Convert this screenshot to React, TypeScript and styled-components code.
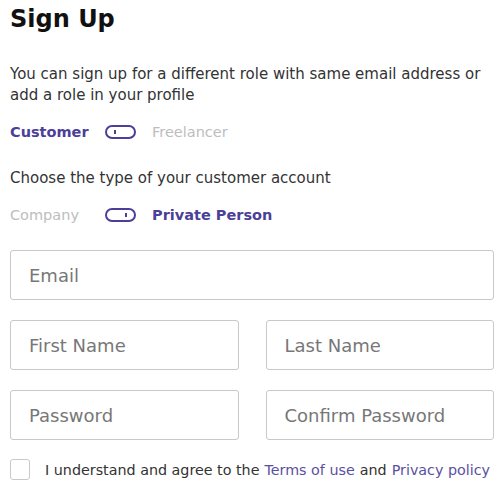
import React from 'react';
import styled, { createGlobalStyle } from 'styled-components';

const Global = createGlobalStyle`
  body {
    margin: 0;
    background: #fff;
    font-family: 'DejaVu Sans', 'Noto Sans', sans-serif;
  }
`;

const Page = styled.div`
  padding: 0 10px;
  color: #333;
`;

const Title = styled.h1`
  margin: 0;
  padding-top: 4px;
  font-size: 24px;
  font-weight: 600;
  line-height: 30px;
  color: #111;
`;

const Note = styled.p`
  margin: 30px 0 0;
  font-size: 15px;
  line-height: 21px;
  color: #333;
`;

const SwitchRow = styled.div`
  display: flex;
  align-items: center;
  gap: 16px;
  height: 26px;
  margin-top: 13px;
  font-size: 14.5px;
`;

const Option = styled.span<{ $active: boolean; $first?: boolean }>`
  color: ${(p) => (p.$active ? '#4b3f99' : '#bdbdbd')};
  font-weight: ${(p) => (p.$active ? 600 : 400)};
  ${(p) => (p.$first ? 'min-width: 79px;' : '')}
`;

const Track = styled.span<{ $right: boolean }>`
  position: relative;
  box-sizing: border-box;
  width: 31px;
  height: 14px;
  border: 2px solid #4b3f99;
  border-radius: 7px;

  &::after {
    content: '';
    position: absolute;
    top: 3px;
    ${(p) => (p.$right ? 'right: 7px;' : 'left: 7px;')}
    width: 2px;
    height: 4px;
    background: #4b3f99;
  }
`;

const Label = styled.p`
  margin: 23px 0 0;
  font-size: 15px;
  line-height: 21px;
`;

const Form = styled.div`
  display: flex;
  flex-direction: column;
  gap: 20px;
  margin-top: 22px;
`;

const Row = styled.div`
  display: grid;
  grid-template-columns: 1fr 1fr;
  gap: 27px;
`;

const Input = styled.input`
  box-sizing: border-box;
  width: 100%;
  height: 50px;
  padding: 0 18px;
  border: 1px solid #c9c9c9;
  border-radius: 3px;
  font-family: inherit;
  font-size: 18px;
  color: #333;
  outline: none;

  &::placeholder {
    color: #777;
  }
`;

const Agree = styled.label`
  display: flex;
  align-items: center;
  gap: 15px;
  margin-top: 19px;
  font-size: 14.3px;
  color: #333;
  white-space: nowrap;
`;

const Box = styled.span`
  flex: none;
  box-sizing: border-box;
  width: 20px;
  height: 21px;
  border: 1px solid #c9c9c9;
  border-radius: 3px;
`;

const Link = styled.a`
  color: #5b509f;
  text-decoration: none;
  margin: 0 5px;
`;

const Switch = ({ left, right, onRight }: { left: string; right: string; onRight: boolean }) => (
  <SwitchRow>
    <Option $active={!onRight} $first>
      {left}
    </Option>
    <Track $right={onRight} />
    <Option $active={onRight}>{right}</Option>
  </SwitchRow>
);

export default function App() {
  return (
    <Page>
      <Global />
      <Title>Sign Up</Title>
      <Note>
        You can sign up for a different role with same email address or
        <br />
        add a role in your profile
      </Note>
      <Switch left="Customer" right="Freelancer" onRight={false} />
      <Label>Choose the type of your customer account</Label>
      <Switch left="Company" right="Private Person" onRight />
      <Form>
        <Input placeholder="Email" />
        <Row>
          <Input placeholder="First Name" />
          <Input placeholder="Last Name" />
        </Row>
        <Row>
          <Input placeholder="Password" type="password" />
          <Input placeholder="Confirm Password" type="password" />
        </Row>
      </Form>
      <Agree>
        <Box />
        <span>
          I understand and agree to the
          <Link href="#">Terms of use</Link>and
          <Link href="#">Privacy policy</Link>
        </span>
      </Agree>
    </Page>
  );
}
